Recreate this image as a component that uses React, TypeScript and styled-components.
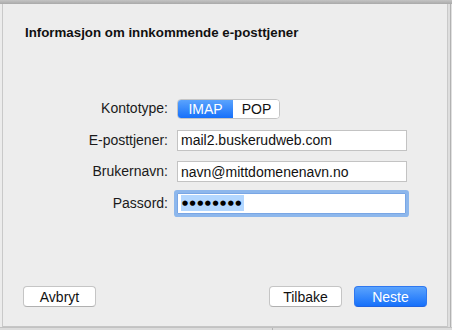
import React from "react";
import styled, { createGlobalStyle } from "styled-components";

const Global = createGlobalStyle`
  html, body { margin: 0; padding: 0; }
  body {
    width: 452px;
    height: 330px;
    overflow: hidden;
    background: #e4e4e4;
    font-family: "Liberation Sans", Arial, sans-serif;
  }
`;

const Screen = styled.div`
  width: 452px;
  height: 330px;
  display: grid;
  grid-template-rows: 4px 323px 3px;
  background: #e6e6e6;
`;

const TopBar = styled.div`
  background: linear-gradient(#c4c4c4, #a9a9a9);
`;

const Middle = styled.div`
  display: grid;
  grid-template-columns: 3px 444px 5px;
`;

const LeftStrip = styled.div`
  background: #ececec;
  border-right: 1px solid #c9c9c9;
  box-sizing: border-box;
`;

const RightStrip = styled.div`
  background: linear-gradient(90deg, #c9c9c9 0, #c9c9c9 1px, #dedede 1px, #dedede 3px, #b2b2b2 3px, #b2b2b2 4px, #e0e0e0 4px);
`;

const BottomStrip = styled.div`
  background: linear-gradient(90deg, #dcdcdc 0, #dcdcdc 272px, #b5b5b5 272px, #b5b5b5 273px, #dcdcdc 273px);
  border-top: 1px solid #c2c2c2;
  box-sizing: border-box;
`;

const Sheet = styled.div`
  background: #ededed;
  border-bottom: 1px solid #c6c6c6;
  box-sizing: border-box;
  display: flex;
  flex-direction: column;
  padding: 0 20px 19px 20px;
`;

const Title = styled.h1`
  margin: 21px 0 0 2px;
  font-size: 13.3px;
  line-height: 16px;
  font-weight: bold;
  color: #111;
`;

const Form = styled.div`
  margin-top: 57px;
  display: grid;
  grid-template-columns: 145px 230px;
  grid-auto-rows: 21px;
  column-gap: 9px;
  row-gap: 10.5px;
  align-items: center;
`;

const Label = styled.div`
  text-align: right;
  font-size: 14px;
  color: #1a1a1a;
  line-height: 21px;
`;

const Segmented = styled.div`
  display: flex;
  width: 103px;
  height: 20px;
  border-radius: 4px;
  border: 1px solid #c4c4c4;
  box-sizing: border-box;
  overflow: hidden;
  background: #fff;
`;

const Segment = styled.div<{ $active?: boolean }>`
  flex: 0 0 auto;
  width: ${(p) => (p.$active ? "55px" : "47px")};
  display: flex;
  align-items: center;
  justify-content: center;
  font-size: 14px;
  color: ${(p) => (p.$active ? "#fff" : "#111")};
  background: ${(p) => (p.$active ? "linear-gradient(#5aa3fd, #1670fa)" : "#fff")};
`;

const Input = styled.div<{ $focused?: boolean }>`
  height: 21px;
  width: ${(p) => (p.$focused ? "229px" : "230px")};
  box-sizing: border-box;
  background: #fff;
  border: 1px solid #c3c3c3;
  border-top-color: #b4b4b4;
  padding: 0 3px;
  display: flex;
  align-items: center;
  font-size: 14px;
  color: #111;
  box-shadow: ${(p) => (p.$focused ? "0 0 0 3px #8db7ec" : "none")};
  border-color: ${(p) => (p.$focused ? "#79a6e5" : "#c3c3c3")};
  border-radius: ${(p) => (p.$focused ? "1px" : "0")};
`;

const Selection = styled.span`
  background: #b3d7ff;
  height: 16px;
  display: inline-flex;
  align-items: center;
  padding: 0 1px 0 1px;
  font-family: "DejaVu Sans", sans-serif;
  font-size: 7px;
  letter-spacing: 1.5px;
  color: #000;
`;

const Spacer = styled.div`
  flex: 1;
`;

const ButtonRow = styled.div`
  display: flex;
  align-items: center;
  gap: 12px;
`;

const Button = styled.button<{ $primary?: boolean }>`
  width: 73px;
  height: 21px;
  box-sizing: border-box;
  border-radius: 4px;
  font-family: "Liberation Sans", Arial, sans-serif;
  font-size: 14px;
  padding: 0;
  border: 1px solid ${(p) => (p.$primary ? "#2f78f0" : "#c5c5c5")};
  border-bottom-color: ${(p) => (p.$primary ? "#1f63e0" : "#b0b0b0")};
  background: ${(p) => (p.$primary ? "linear-gradient(#5aa3fd, #1670fa)" : "#fff")};
  color: ${(p) => (p.$primary ? "#fff" : "#111")};
`;

export default function App() {
  return (
    <>
      <Global />
      <Screen>
        <TopBar />
        <Middle>
          <LeftStrip />
          <Sheet>
            <Title>Informasjon om innkommende e-posttjener</Title>
            <Form>
              <Label>Kontotype:</Label>
              <Segmented>
                <Segment $active>IMAP</Segment>
                <Segment>POP</Segment>
              </Segmented>
              <Label>E-posttjener:</Label>
              <Input>mail2.buskerudweb.com</Input>
              <Label>Brukernavn:</Label>
              <Input>navn@mittdomenenavn.no</Input>
              <Label>Passord:</Label>
              <Input $focused>
                <Selection>●●●●●●●●</Selection>
              </Input>
            </Form>
            <Spacer />
            <ButtonRow>
              <Button>Avbryt</Button>
              <Spacer />
              <Button>Tilbake</Button>
              <Button $primary>Neste</Button>
            </ButtonRow>
          </Sheet>
          <RightStrip />
        </Middle>
        <BottomStrip />
      </Screen>
    </>
  );
}
